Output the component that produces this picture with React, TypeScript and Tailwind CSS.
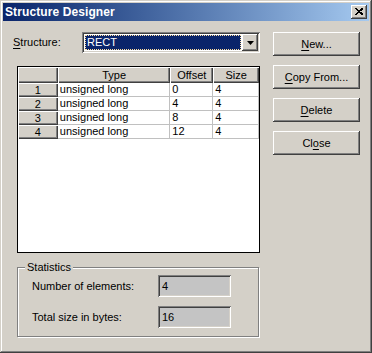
import React from "react";

const raised =
  "shadow-[inset_-1px_-1px_#404040,inset_1px_1px_#ffffff,inset_-2px_-2px_#808080,inset_2px_2px_#d4d0c8]";
const sunken =
  "shadow-[inset_1px_1px_#808080,inset_-1px_-1px_#ffffff,inset_2px_2px_#404040,inset_-2px_-2px_#d4d0c8]";
const hdr =
  "shadow-[inset_1px_1px_#ffffff,inset_-1px_-1px_#404040,inset_-2px_-2px_#808080]";

const rows = [
  { n: 1, type: "unsigned long", off: "0", size: "4" },
  { n: 2, type: "unsigned long", off: "4", size: "4" },
  { n: 3, type: "unsigned long", off: "8", size: "4" },
  { n: 4, type: "unsigned long", off: "12", size: "4" },
];

function Btn({ children }: { children: React.ReactNode }) {
  return (
    <div
      className={`h-[24px] w-[87px] bg-[#d4d0c8] flex items-center justify-center text-black ${raised}`}
    >
      {children}
    </div>
  );
}

export default function App() {
  return (
    <div className="w-[372px] h-[353px] bg-[#d4d0c8] font-['Liberation_Sans',Arial,sans-serif] text-[11px] text-black overflow-hidden">
      <div className="w-[372px] h-[353px] pt-[3px] px-[3px] shadow-[inset_-1px_-1px_#404040,inset_1px_1px_#d4d0c8,inset_-2px_-2px_#808080,inset_2px_2px_#ffffff]">
        {/* title bar */}
        <div className="h-[18px] bg-linear-to-r from-[#0a246a] to-[#a6caf0] flex items-center pl-[2px] pr-[2px]">
          <span className="text-white font-bold text-[12px] leading-none tracking-[0.1px]">
            Structure Designer
          </span>
          <div className="flex-1" />
          <div
            className={`w-[16px] h-[14px] bg-[#d4d0c8] flex items-center justify-center ${raised}`}
          >
            <svg width="8" height="7" viewBox="0 0 8 7" className="mb-[1px]">
              <path d="M0.5 0.5 L7 6.5 M1.5 0.5 L8 6.5 M7 0.5 L0.5 6.5 M8 0.5 L1.5 6.5" stroke="#000" strokeWidth="1" shapeRendering="crispEdges" />
            </svg>
          </div>
        </div>

        {/* body */}
        <div className="flex pl-[10px] pt-[11px]">
          <div className="w-[247px] flex flex-col">
            <div className="flex items-center h-[21px]">
              <span className="w-[69px]">
                <span className="underline underline-offset-[2px]">S</span>tructure:
              </span>
              <div className={`w-[178px] h-[21px] bg-white p-[2px] flex ${sunken}`}>
                <div className="flex-1 p-[1px]">
                  <div className="h-full bg-[#0a246a] text-white outline outline-1 outline-dotted outline-[#ffe0a0] -outline-offset-1 flex items-center pl-[2px] leading-none">
                    RECT
                  </div>
                </div>
                <div className={`w-[16px] h-[17px] bg-[#d4d0c8] flex items-center justify-center ${raised}`}>
                  <svg width="7" height="4" viewBox="0 0 7 4">
                    <path d="M0 0 H7 L3.5 4 Z" fill="#000" />
                  </svg>
                </div>
              </div>
            </div>

            {/* grid */}
            <div className="ml-[4px] mt-[13px] w-[243px] h-[187px] border border-black bg-white">
              <div className="flex h-[16px]">
                <div className={`w-[40px] bg-[#d4d0c8] ${hdr}`} />
                <div className={`w-[113px] bg-[#d4d0c8] flex items-center justify-center ${hdr}`}>Type</div>
                <div className={`w-[43px] bg-[#d4d0c8] flex items-center justify-center ${hdr}`}>Offset</div>
                <div className={`w-[46px] bg-[#d4d0c8] flex items-center justify-center ${hdr}`}>Size</div>
              </div>
              {rows.map((r) => (
                <div key={r.n} className="flex h-[14px] leading-none">
                  <div className={`w-[40px] bg-[#d4d0c8] flex items-center justify-center ${hdr}`}>{r.n}</div>
                  <div className="w-[113px] border-r border-b border-[#c0c0c0] flex items-center pl-[2px]">{r.type}</div>
                  <div className="w-[43px] border-r border-b border-[#c0c0c0] flex items-center pl-[2px]">{r.off}</div>
                  <div className="w-[46px] border-r border-b border-[#c0c0c0] flex items-center pl-[2px]">{r.size}</div>
                </div>
              ))}
            </div>

            {/* statistics */}
            <div className="ml-[4px] mt-[14px] w-[242px] h-[70px] relative border border-[#808080] shadow-[1px_1px_#ffffff,inset_1px_1px_#ffffff] pt-[7px] pl-[14px] flex flex-col gap-[9px]">
              <span className="absolute left-[7px] top-[-8px] bg-[#d4d0c8] px-[2px] leading-[14px]">Statistics</span>
              <div className="flex items-center h-[22px]">
                <span className="w-[126px]">Number of elements:</span>
                <div className={`w-[73px] h-[22px] bg-[#c4c4c4] flex items-center pl-[4px] ${sunken}`}>4</div>
              </div>
              <div className="flex items-center h-[22px]">
                <span className="w-[126px]">Total size in bytes:</span>
                <div className={`w-[73px] h-[22px] bg-[#c4c4c4] flex items-center pl-[4px] ${sunken}`}>16</div>
              </div>
            </div>
          </div>

          {/* buttons */}
          <div className="ml-[13px] flex flex-col gap-[9px]">
            <Btn>
              <span><span className="underline underline-offset-[2px]">N</span>ew...</span>
            </Btn>
            <Btn>
              <span><span className="underline underline-offset-[2px]">C</span>opy From...</span>
            </Btn>
            <Btn>
              <span><span className="underline underline-offset-[2px]">D</span>elete</span>
            </Btn>
            <Btn>
              <span>Cl<span className="underline underline-offset-[2px]">o</span>se</span>
            </Btn>
          </div>
        </div>
      </div>
    </div>
  );
}
